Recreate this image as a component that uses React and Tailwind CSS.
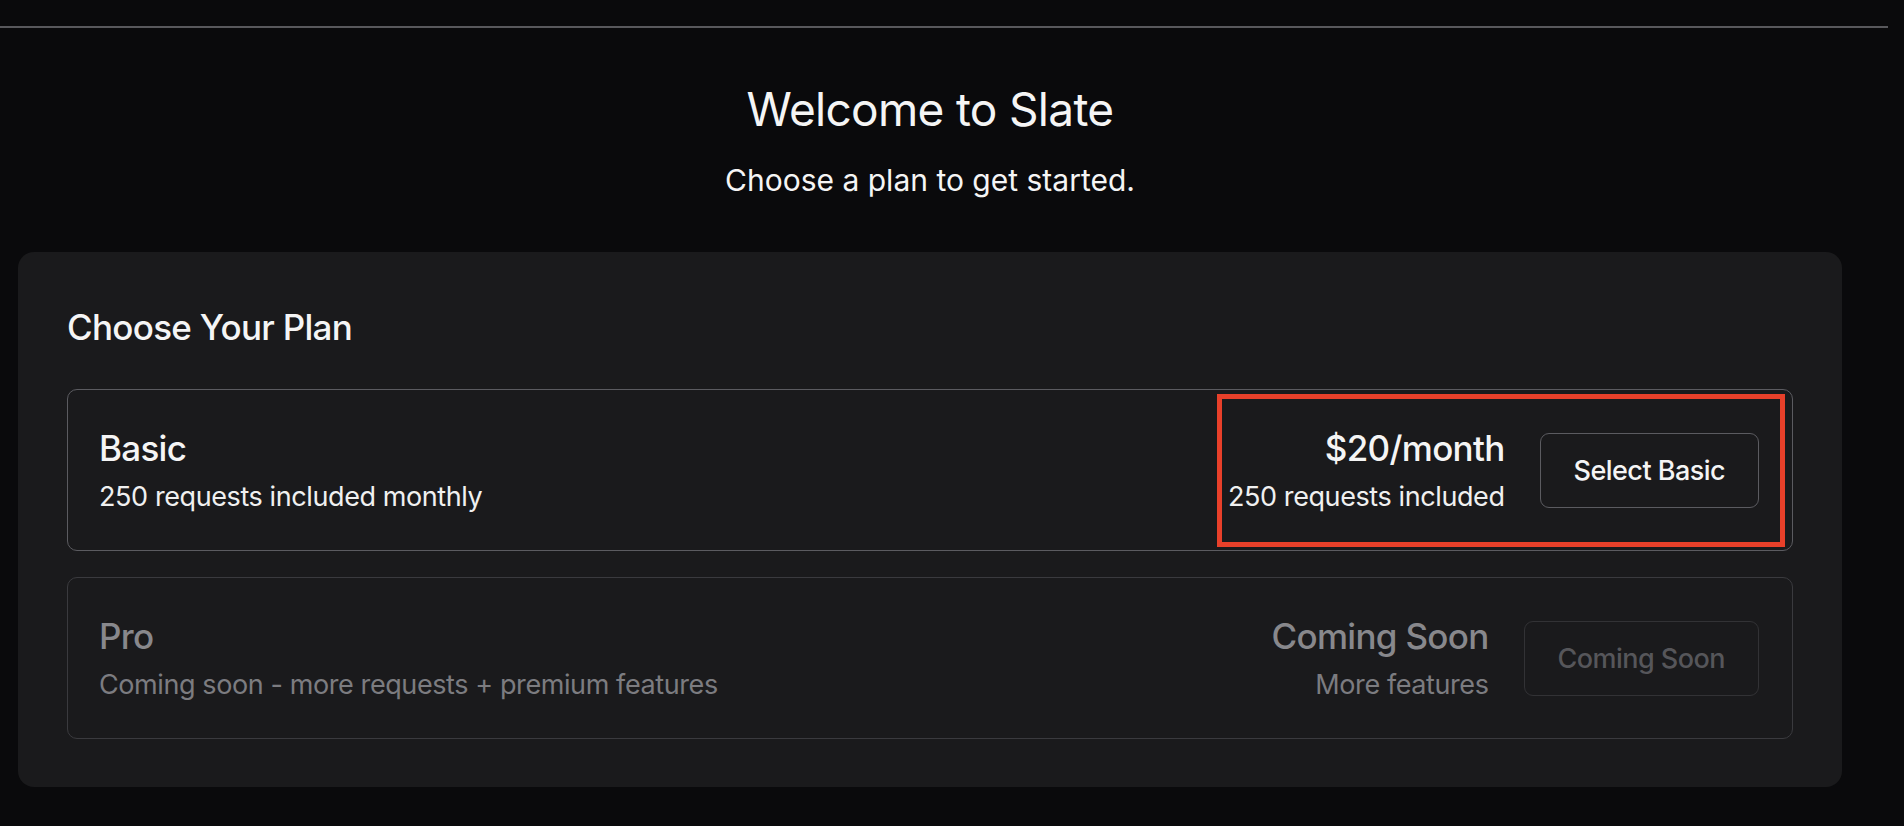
import React from 'react';

const plans = [
  {
    id: 'basic',
    name: 'Basic',
    description: '250 requests included monthly',
    price: '$20/month',
    detail: '250 requests included',
    cta: 'Select Basic',
    disabled: false,
  },
  {
    id: 'pro',
    name: 'Pro',
    description: 'Coming soon - more requests + premium features',
    price: 'Coming Soon',
    detail: 'More features',
    cta: 'Coming Soon',
    disabled: true,
  },
];

function PlanRow({ plan }) {
  const muted = plan.disabled;
  return (
    <div
      className={`relative flex items-center justify-between h-[162px] rounded-[10px] border pl-[31px] pr-[33px] ${
        muted ? 'border-[#3a3a3e]' : 'border-[#5b5b60]'
      }`}
    >
      <div className="flex flex-col gap-[17px]">
        <h3
          className={`text-[35px] leading-none font-medium tracking-[-0.02em] ${
            muted ? 'text-[#88888c]' : 'text-[#f5f5f5]'
          }`}
        >
          {plan.name}
        </h3>
        <p
          className={`text-[27px] leading-none tracking-[-0.015em] ${
            muted ? 'text-[#7c7c80]' : 'text-[#f0f0f0]'
          }`}
        >
          {plan.description}
        </p>
      </div>

      <div className="flex items-center gap-[35px]">
        <div className="flex flex-col items-end gap-[17px]">
          <span
            className={`text-[35px] leading-none font-medium tracking-[-0.02em] ${
              muted ? 'text-[#88888c]' : 'text-[#f5f5f5]'
            }`}
          >
            {plan.price}
          </span>
          <span
            className={`text-[27px] leading-none tracking-[-0.015em] ${
              muted ? 'text-[#7c7c80]' : 'text-[#f0f0f0]'
            }`}
          >
            {plan.detail}
          </span>
        </div>
        <button
          disabled={plan.disabled}
          className={`h-[75px] px-[33px] rounded-[9px] border text-[27px] font-medium leading-none tracking-[-0.02em] ${
            muted
              ? 'border-[#323235] text-[#56565a]'
              : 'border-[#5b5b60] text-[#f5f5f5]'
          }`}
        >
          {plan.cta}
        </button>
      </div>

      {/* highlight annotation from the screenshot */}
      {!muted && (
        <div className="pointer-events-none absolute top-[4px] bottom-[3px] right-[7px] w-[568px] border-[5px] border-[#e8402a]" />
      )}
    </div>
  );
}

export default function App() {
  return (
    <div className="min-h-screen bg-[#0a0a0c] font-['Inter',sans-serif] text-[#f5f5f5]">
      <div className="w-[1888px] h-[28px] border-b-2 border-[#58585c]" />

      <div className="w-[1860px] px-[18px] pb-[40px]">
        <div className="text-center">
          <h1 className="mt-[58px] text-[46px] leading-none font-normal tracking-[-0.015em]">
            Welcome to Slate
          </h1>
          <p className="mt-[33px] text-[30px] leading-none">
            Choose a plan to get started.
          </p>
        </div>

        <div className="mt-[57px] rounded-2xl bg-[#1a1a1c] px-[49px] pt-[58px] pb-[48px]">
          <h2 className="text-[35px] leading-none font-medium tracking-[-0.02em]">
            Choose Your Plan
          </h2>
          <div className="mt-[44px] flex flex-col gap-[26px]">
            {plans.map(plan => (
              <PlanRow key={plan.id} plan={plan} />
            ))}
          </div>
        </div>
      </div>
    </div>
  );
}
